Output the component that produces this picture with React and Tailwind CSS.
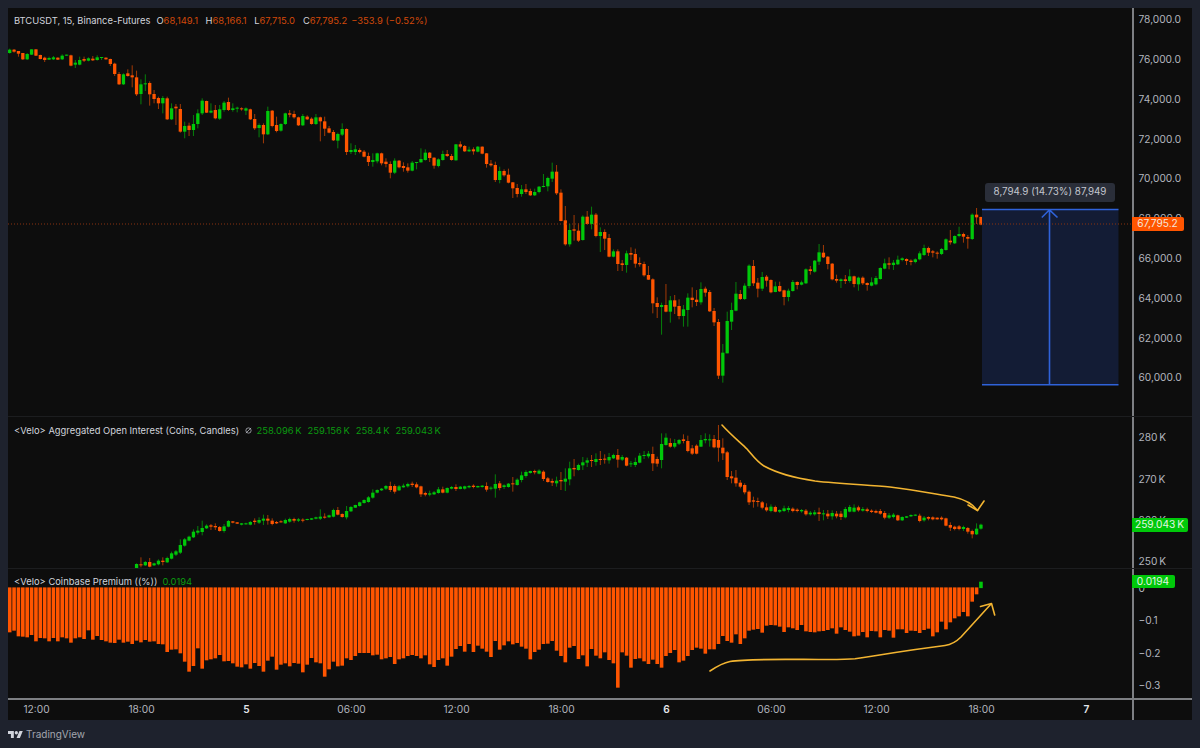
import React from "react";

const parse = (s, y0) =>
  s.trim().split(/\s*,\s*/).filter(Boolean).map((t) => {
    const [c, a, b, w1, w2] = t.trim().split(/\s+/);
    const top = y0 + Number(a) / 3;
    const bot = y0 + Number(b) / 3;
    return { c, top, bot, w1: y0 + Number(w1 ?? a) / 3, w2: y0 + Number(w2 ?? b) / 3 };
  });

const main = [
  ...parse(`g 29 39 26 41,r 29 35 27 38,r 33 41 33 50,r 39 58 39 60,g 42 58 39 60,g 28 44 28 45,r 28 47 28 48,r 45 57 44 58,r 53 60 50 66,g 54 59 50 60,g 52 58 48 60,r 53 59 52 60,g 47 58 43 60,g 44 47 44 47,r 46 77 44 79,g 68 74 60 84,g 60 74 50 76,r 57 62 50 66,g 55 62 52 64,r 56 61 48 63,g 52 60 46 62,g 51 53 51 60,r 53 58 52 59,r 57 72 56 78,r 71 102 68 108,r 102 133 96 135,g 103 133 100 135,r 100 108 88 110,r 106 112 76 142,r 112 163 92 168,g 133 162 118 193,g 130 133 103 153,r 129 163 124 197,r 162 177 150 190,r 174 190 170 207,g 174 190 168 220,r 175 238 170 240,g 205 238 190 240,r 200 205 192 255,r 207 275 192 278,g 258 275 245 295,r 257 270 248 288,g 252 270 225 288,g 220 252 208 265`, 40),
  ...parse(`g 302 340 295 345,r 303 338 302 339,g 332 338 310 340,r 330 355 315 358,g 328 356 315 360,g 308 330 303 335,r 306 330 293 333,g 325 330 310 335,g 323 326 320 337,r 325 328 322 332,g 325 332 322 345,r 328 358 326 360,r 357 385 342 390,g 375 384 370 412,r 375 403 370 430,g 333 403 320 405,r 332 378 330 382,r 375 393 350 397,g 372 392 370 395,g 340 372 338 375,r 340 344 330 352,r 342 352 332 356,r 352 376 350 378,g 348 376 342 378,r 350 358 346 360,r 356 372 352 374,g 352 372 342 375,r 352 364 350 424,r 364 386 350 408,r 385 398 378 400,r 396 421 390 423,g 402 422 398 445,g 387 404 370 408,r 387 456 385 465,g 450 456 430 462,g 448 456 435 465,r 450 456 445 460,r 455 470 450 472`, 0),
  ...parse(`r 48 66 38 78,g 60 66 40 80,g 40 64 38 70,r 40 70 38 76,r 65 72 55 82,r 72 98 64 115,g 62 98 55 102`, 140),
  ...parse(`r 92 112 90 115,r 108 114 97 125,r 112 122 100 128,g 98 122 93 124,g 96 99 96 118,g 87 97 55 98,g 68 90 58 92,r 68 84 66 96,r 83 107 82 116,g 88 108 85 112,g 72 90 62 92,r 72 78 60 81,r 78 90 72 92,g 43 91 42 92,r 43 50 34 55,r 48 64 45 66,g 59 64 50 66,r 58 64 52 74,g 50 65 48 67,r 50 71 49 73,r 70 102 69 113,r 101 106 90 110,r 105 150 95 156,g 123 150 110 160,r 123 136 118 140,r 134 158 116 160,r 157 175 156 204,r 174 192 162 202,g 178 192 165 200,r 178 186 162 192,r 183 196 176 198,g 186 196 176 198,g 170 186 168 190,g 168 171 132 172,g 144 169 140 184,g 125 146 98 156,r 125 190 105 195,r 188 273 178 274,r 271 343 228 347,g 300 343 282 350,r 298 302 255 332,r 302 332 280 336,g 260 330 256 332,r 260 282 243 284,g 254 282 230 298,r 254 318 249 322,g 306 318 292 366,r 306 326 298 360,r 324 380 312 382,g 364 380 358 382,r 364 402 358 423,r 400 405 390 423,g 370 405 362 428,r 369 374 352 390,r 372 401 356 413,r 399 403 382 410,r 402 436 395 440,r 435 449 408 450,r 448 520 445 550,r 519 531 502 564,g 525 531 518 614,r 525 545 462 547,g 511 545 498 578,r 511 530 495 552,r 528 558 508 568,g 538 558 525 590,g 503 540 490 590,r 503 510 472 532,r 509 516 480 528,g 477 517 457 524,r 476 488 470 500,r 486 544 480 546,r 543 577 534 588,r 576 737 567 747,g 668 737 642 758,g 573 670 545 670,g 540 575 518 600,g 491 542 456 544,r 492 507 480 510,g 467 507 460 510,g 407 468 403 475,r 408 460 390 468,r 458 476 444 502,g 441 476 426 483,r 440 452 435 470,r 450 487 448 490,g 469 486 455 487,r 468 484 455 486,r 481 501 479 526,g 482 501 476 514,g 456 483 450 485,r 456 465 454 478`, 130),
  ...parse(`g 337 344 332 346,g 298 340 295 342,r 298 303 288 314,g 272 305 270 308,g 247 275 222 285,r 248 262 225 264,r 260 282 258 298,r 281 328 279 331,r 327 332 314 338,g 328 333 325 354,r 328 333 315 342,g 319 333 298 338,r 319 342 317 352,g 323 343 320 362,r 323 340 319 345,r 339 345 337 362,g 337 347 322 349,g 324 343 318 346,g 294 327 292 329,g 280 296 266 298,r 280 284 262 298,g 278 285 270 300,g 269 283 257 285,g 265 270 262 274,r 267 273 265 285,r 272 276 268 286,g 268 276 265 280,g 250 268 244 271,g 234 255 224 258,r 234 248 230 258,r 244 248 240 262,r 248 251 244 266,g 237 252 234 255,g 208 240 205 242,r 212 217 180 224,g 198 220 196 222,g 192 198 170 202,r 192 200 188 218,r 201 206 195 236,g 134 207 130 210,r 134 142 114 162,r 141 164 140 166`, 170),
].map((d, i) => ({ ...d, i }));

const oi = [
  ...parse(`g 462 474 460 474,r 463 466 442 472,g 456 466 453 468,r 456 470 444 472,g 460 466 458 468,g 452 463 448 466,r 452 456 442 466,g 444 457 440 459,g 430 446 425 448,g 424 434 420 438,g 405 428 388 432,g 388 407 384 410,g 380 392 377 394,g 365 382 358 384,g 362 368 348 374,g 354 366 332 376,g 347 355 343 357,r 346 350 342 360,r 348 352 340 360,r 351 363 348 365,g 349 363 342 368,g 333 350 330 352,r 334 338 333 340,r 337 341 336 342,g 340 344 339 346,g 340 343 338 344,g 336 344 333 346,r 332 336 325 344,g 330 338 322 342,g 326 332 314 345,r 326 332 315 344,r 332 342 325 346,r 336 340 333 342,r 334 337 331 338,g 330 340 326 342,g 327 335 323 338,r 327 332 323 338,g 328 332 324 336,r 329 332 325 337,g 327 330 326 331,g 325 329 324 330,g 322 326 320 328,g 320 326 298 330,r 320 322 310 326,g 316 322 314 323,g 300 320 296 322,r 300 314 291 316,r 312 321 310 323,g 303 322 288 328,g 291 304 288 306,g 285 293 284 294,g 277 288 275 290,g 270 279 268 281,g 262 276 258 278,g 248 263 238 266,g 240 248 238 250,g 236 241 234 243,g 228 236 225 240,r 228 240 215 246`, 410),
  ...parse(`r 183 200 178 206,g 184 196 180 198,g 182 187 176 188,g 177 184 173 188,r 176 180 170 186,r 178 187 172 190,r 184 208 182 216,r 204 209 200 214,g 205 209 197 214,g 202 208 198 210,g 193 204 186 206,r 193 203 185 205,g 189 203 187 205,g 186 191 183 193,r 186 192 178 198,g 185 192 183 193,g 184 191 182 194,g 183 187 180 190,r 182 186 178 190,g 183 187 182 188,g 182 186 180 188,r 183 194 172 200,g 188 191 184 196,g 177 191 148 218,r 175 189 168 196,g 181 186 178 192,g 176 186 174 188,r 175 178 156 200,g 164 180 160 182,g 151 165 140 172,g 141 153 136 158,g 138 144 137 146,r 138 142 134 148,g 137 146 133 148,r 140 162 136 168,r 160 171 156 173,r 168 173 161 183,g 167 175 155 185,r 165 169 141 195,g 161 170 130 198,g 130 163 110 181,r 129 133 102 154,g 120 135 116 137,g 112 121 96 135,g 106 113 98 126,r 105 108 90 126,g 102 111 85 122,r 102 104 78 120,r 101 103 88 116,g 96 106 84 116,g 90 100 86 102,r 90 104 72 128,g 96 104 90 108,r 98 122 96 124,g 115 118 108 126,g 111 120 98 126,g 92 113 84 115,g 90 92 78 102,g 86 94 78 100`, 425),
  ...parse(`r 117 145 95 168,r 132 146 125 155,g 87 135 55 160,g 68 90 55 92,r 84 95 70 98,g 84 95 72 100,g 75 86 72 90,r 73 78 58 85,r 78 108 62 112,r 100 116 90 120,r 92 116 88 118,g 75 95 60 96,g 72 76 55 85,g 73 76 58 95,r 72 97 60 100,r 75 98 30 140,r 98 115 70 135,r 112 186 108 195,r 184 190 168 205,r 188 205 165 215,r 203 215 195 220,r 210 232 205 238,r 230 262 226 270,r 256 260 245 278,r 258 260 248 275,r 262 278 258 283,r 277 286 265 290,g 275 288 268 292,r 276 290 272 292,g 285 290 283 294,g 280 288 272 291,g 279 285 273 292,r 281 288 277 292,r 284 288 280 292,g 285 289 282 293,r 287 298 282 302,g 293 298 288 302,g 292 298 285 302,r 292 297 278 318,g 295 298 285 316,r 296 304 285 312,g 294 304 286 314,r 296 304 288 310,r 296 306 288 315,g 282 307 276 310,g 276 290 270 292,g 278 290 268 292,r 277 286 272 290,g 282 287 276 290,r 283 288 278 292,r 287 291 283 294,r 288 293 284 295,r 288 296 282 299,r 294 308 288 313,g 301 308 294 312,g 299 306 294 310,r 301 316 299 318,g 306 316 304 318,g 304 308 303 309,g 300 304 298 306,g 299 302 298 303,r 302 318 296 322,g 308 316 303 320,r 306 311 304 316,r 307 313 304 316,r 308 313 307 314,r 308 313 304 316,r 310 332 308 334,r 330 338 322 348,r 335 342 332 346,r 334 342 330 346,g 336 342 332 348,r 339 350 336 356,r 348 358 344 370,g 341 358 325 360,g 329 341 326 344`, 415),
].map((d, i) => ({ ...d, i: i + 29 }));

const prem = [
  ...[187,182,199,200,202,195,214,204,205,214,204,214,202,205,218,205,202,207,181,209,198,210,214,218,219,209,218,215,222,212,217,210,215,214,222,223,246,239,238,250,275,305,288,235,296,271,268,265,255,274,273,280,290,292,283,296,279,288,305,272,260,299,284,280,289,279,281,307,284,264,277,280,320,298,275,289,287,265,270,258,249,249,249,256,254,268,265,261,282],
  ...[268,265,258,255,258,265,256,283,291,270,265,287,260,237,228,245,222,246,227,236,245,261,213,239,226,214,223,219,230,236,268,246,239,222,221,213,242,258,277,233,228,267,256,289,237,257,265,247,270,280,353,247,257,293,267,265,274,282,269,282,293,258,249,240,277,272,258,240,233,236,251,238,238,222,198,213,218,193,222,205,182,179,177,188,167,165,166,170,186,172,175,180],
  ...[165,184,186,187,184,183,180,175,191,172,180,185,199,197,186,202,183,184,202,180,182,203,178,178,189,182,183,189,180,176,199,187,155,178,157,145,139,126,139,95,73],
];

const X = (i) => 9.7 + 4.375 * i;
const RED = "#ff5500";
const GREEN = "#00c80a";

function Candles({ data }) {
  return data.map((d) => {
    const x = X(d.i);
    const col = d.c === "g" ? GREEN : RED;
    return (
      <g key={d.i}>
        <line x1={x} x2={x} y1={d.w1} y2={d.w2} stroke={col} strokeWidth="1" strokeOpacity="0.62" />
        <rect x={x - 1.65} y={d.top} width="3.3" height={Math.max(d.bot - d.top, 1)} fill={col} />
      </g>
    );
  });
}

const Ann = (p) => (
  <path fill="none" stroke="#f2b431" strokeWidth="1.6" strokeLinecap="round" strokeLinejoin="round" {...p} />
);

const Val = ({ children }) => <span className="text-[#d2490a]">{children}</span>;

export default function App() {
  return (
    <div className="flex h-[748px] w-[1200px] flex-col overflow-hidden bg-[#1e222d] px-2 pt-2 font-['Inter',sans-serif] antialiased">
      <div className="flex h-[712px] flex-col bg-[#0d0d0d]">
        {/* main pane */}
        <div className="flex h-[409px] border-b border-[#1c1d1f]">
          <div className="relative w-[1124px]">
            <div className="absolute left-[6px] top-[6px] flex items-center text-[9.4px] leading-[13px] whitespace-nowrap text-[#d1d4dc]">
              <span className="mr-[6px]">BTCUSDT, 15, Binance-Futures</span>
              <span className="mr-[7.5px]">O<Val>68,149.1</Val></span>
              <span className="mr-[7.5px]">H<Val>68,166.1</Val></span>
              <span className="mr-[8px]">L<Val>67,715.0</Val></span>
              <span className="mr-[4px]">C<Val>67,795.2</Val></span>
              <Val>−353.9 (−0.52%)</Val>
            </div>
            <svg viewBox="8 8 1124 408" className="block h-[408px] w-[1124px]">
              <Candles data={main} />
              <rect x="982" y="209.5" width="136.5" height="175" fill="#131c35" />
              <path d="M8 224H1132" stroke="#8a3210" strokeWidth="1" strokeDasharray="1 2" />
              <path d="M982 209.5H1118.5M982 384.8H1118.5M1049.5 209.5V384.8M1041.8 217.5L1049.5 209.8L1057.5 217.5" fill="none" stroke="#2f62d9" strokeWidth="1.6" />
            </svg>
            <div className="absolute left-[977px] top-[174.5px] flex h-[19.5px] w-[130px] items-center justify-center rounded-[3px] bg-[#2a2e39] text-[9.8px] whitespace-nowrap text-[#c3c6ce]">
              8,794.9 (14.73%) 87,949
            </div>
          </div>
          <div className="relative w-[60px] border-l-[2.5px] border-[#7d7f83]">
            <div className="-mt-2 flex flex-col">
              {["78,000.0","76,000.0","74,000.0","72,000.0","70,000.0","68,000.0","66,000.0","64,000.0","62,000.0","60,000.0"].map((t) => (
                <div key={t} className="flex h-[39.8px] items-center pl-[4.5px] text-[10.2px] text-[#b2b5be]">{t}</div>
              ))}
            </div>
            <div className="absolute left-[-2.5px] top-[209.3px] flex h-[13.4px] w-[52px] items-center justify-center rounded-r-[2px] bg-[#ff5500] text-[10.2px] text-[#f5e6dc]">
              67,795.2
            </div>
          </div>
        </div>

        {/* open interest pane */}
        <div className="flex h-[152px] border-b border-[#1c1d1f]">
          <div className="relative w-[1124px]">
            <div className="absolute left-[6px] top-[6.5px] flex items-center text-[9.4px] leading-[13px] whitespace-nowrap text-[#d1d4dc]">
              <span>&lt;Velo&gt; Aggregated Open Interest (Coins, Candles)</span>
              <svg viewBox="0 0 8 8" className="ml-[6px] h-[7px] w-[7px]">
                <circle cx="4" cy="4" r="3" fill="none" stroke="#b2b5be" strokeWidth="0.9" />
                <path d="M1 7L7 1" stroke="#b2b5be" strokeWidth="0.9" />
              </svg>
              <div className="ml-[4.5px] flex gap-[6px] text-[#0b9a10]">
                <span>258.096&#8201;K</span>
                <span>259.156&#8201;K</span>
                <span>258.4&#8201;K</span>
                <span>259.043&#8201;K</span>
              </div>
            </div>
            <svg viewBox="8 417 1124 151" className="block h-[151px] w-[1124px]">
              <Candles data={oi} />
              <Ann d="M722 425C732 436 741 443 747 449C753 456 757 462 764 466C775 472 795 478 815 481C840 484 870 485 890 487C915 490 935 494 954 497C963 499 972 503 977.5 510.5" />
              <Ann d="M968 505L977.5 510.5L984 501" />
            </svg>
          </div>
          <div className="relative w-[60px] border-l-[2.5px] border-[#7d7f83]">
            <div className="flex flex-col pt-[0.5px]">
              {["280\u2009K","270\u2009K","260\u2009K","250\u2009K"].map((t) => (
                <div key={t} className="flex h-[41.2px] items-center pl-[4.5px] text-[10.2px] text-[#b2b5be]">{t}</div>
              ))}
            </div>
            <div className="absolute left-[-2.5px] top-[101.3px] flex h-[13.4px] w-[56px] items-center justify-center rounded-r-[2px] bg-[#00c80a] text-[10.2px] whitespace-nowrap text-[#e4f5e4]">
              259.043&#8201;K
            </div>
          </div>
        </div>

        {/* premium pane */}
        <div className="flex h-[129px]">
          <div className="relative w-[1124px]">
            <div className="absolute left-[6px] top-[5.5px] flex items-center text-[9.4px] leading-[13px] whitespace-nowrap text-[#d1d4dc]">
              <span>&lt;Velo&gt; Coinbase Premium ((%))</span>
              <span className="ml-[5px] text-[#0b9a10]">0.0194</span>
            </div>
            <svg viewBox="8 569 1124 129" className="block h-[129px] w-[1124px]">
              {prem.map((z, i) => (
                <rect key={i} x={X(i) - 1.8} y="587.4" width="3.6" height={570 + z / 3 - 587.4} fill={RED} />
              ))}
              <rect x={X(222) - 1.8} y="581.7" width="3.6" height="6.4" fill={GREEN} />
              <Ann d="M710 671C716 667 722 663 730 661.5C745 659 770 659.5 800 659.4C820 659.3 842 660 855 658.8C870 657 900 651 945 645.5C952 644.5 957 641 961 637C971 626 981 615 991 604" />
              <Ann d="M980.5 606.5L991.5 603.5L994.7 615" />
            </svg>
          </div>
          <div className="relative w-[60px] border-l-[2.5px] border-[#7d7f83]">
            <div className="flex flex-col pt-[3.5px]">
              {["0","−0.1","−0.2","−0.3"].map((t) => (
                <div key={t} className="flex h-[32.4px] items-center pl-[4.5px] text-[10.2px] text-[#b2b5be]">{t}</div>
              ))}
            </div>
            <div className="absolute left-[-2.5px] top-[6px] flex h-[13.3px] w-[43px] items-center justify-center rounded-r-[2px] bg-[#00c80a] text-[10.2px] text-[#e4f5e4]">
              0.0194
            </div>
          </div>
        </div>

        {/* time axis */}
        <div className="flex h-[22px] border-t-2 border-[#7d7f83]">
          <div className="w-[1124px] overflow-hidden">
            <div className="-ml-6 flex h-full items-center text-[10.2px] text-[#b2b5be]">
              {[["12:00"],["18:00"],["5",1],["06:00"],["12:00"],["18:00"],["6",1],["06:00"],["12:00"],["18:00"],["7",1]].map(([t, b], i) => (
                <div key={i} className={`flex w-[105px] shrink-0 justify-center ${b ? "font-semibold text-[#e3e5ea]" : ""}`}>{t}</div>
              ))}
            </div>
          </div>
          <div className="w-[60px] border-l-[2.5px] border-[#7d7f83]" />
        </div>
      </div>

      {/* footer */}
      <div className="flex flex-1 items-center gap-[3px] pt-[1px] text-[10px] text-[#a3a6af]">
        <svg viewBox="0 4 36 18" className="h-[7.6px] w-[15px]" fill="#d1d4dc">
          <path d="M14 22H7V11H0V4h14v18zM28 22h-8l7.5-18h8L28 22z" />
          <circle cx="20" cy="8" r="4" />
        </svg>
        <span>TradingView</span>
      </div>
    </div>
  );
}
